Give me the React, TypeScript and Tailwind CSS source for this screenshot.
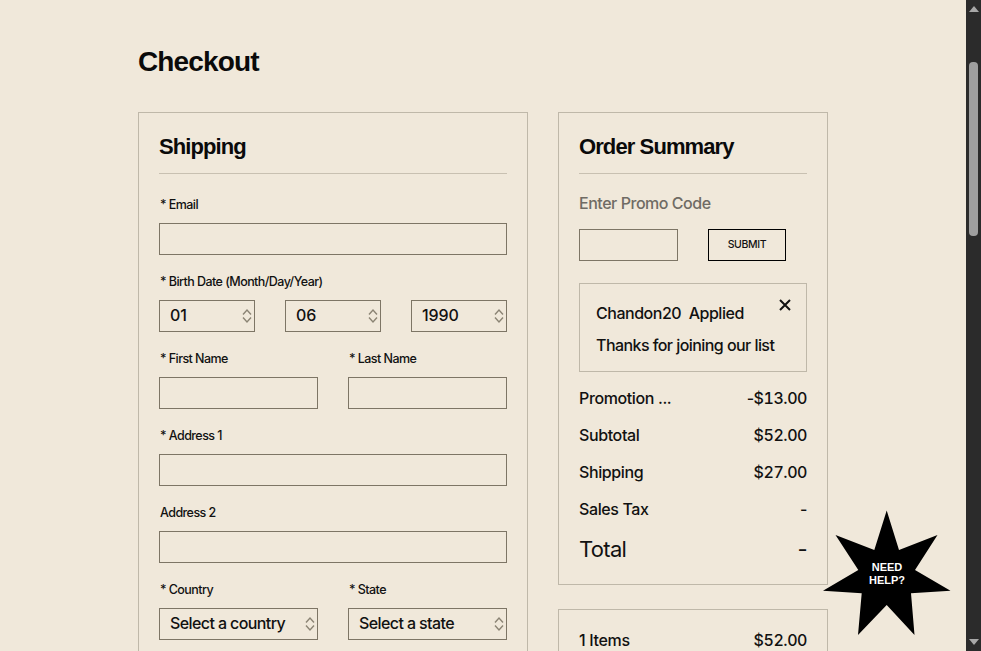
const font = "font-['Inter',sans-serif]";
const heading = "font-['Liberation_Sans',Arial,sans-serif] font-bold text-[#0a0a0a]";

function UpDown({ className }: { className?: string }) {
  return (
    <svg width="10" height="18" viewBox="0 0 10 18" fill="none" className={className}>
      <path d="M1 7.5 L5 3 L9 7.5" stroke="#8b8474" strokeWidth="1.4" />
      <path d="M1 10.5 L5 15 L9 10.5" stroke="#8b8474" strokeWidth="1.4" />
    </svg>
  );
}

function Label({ children }: { children: React.ReactNode }) {
  return <div className="h-[14px] pl-px text-[12.5px] font-medium leading-[14px] tracking-[-0.55px] text-[#111]">{children}</div>;
}

function Box({ className = "" }: { className?: string }) {
  return <div className={`h-8 border border-[#7d7565] ${className}`} />;
}

function Field({ label, children }: { label: string; children?: React.ReactNode }) {
  return (
    <div className="flex min-w-0 flex-col gap-[11px]">
      <Label>{label}</Label>
      {children ?? <Box />}
    </div>
  );
}

function Spinner({ value }: { value: string }) {
  return (
    <div className="flex h-8 items-center justify-between border border-[#7d7565] pl-[10px] pr-[2px] text-[16px] font-[450] tracking-[-0.1px] text-[#111]">
      <span className="pb-[2px]">{value}</span>
      <UpDown />
    </div>
  );
}

function SelectBox({ value }: { value: string }) {
  return (
    <div className="flex h-8 items-center justify-between border border-[#7d7565] pl-[10px] pr-[2px] text-[16px] font-[450] tracking-[-0.6px] text-[#111]">
      <span className="pb-[2px]">{value}</span>
      <UpDown />
    </div>
  );
}

function Row({ label, children }: { label: string; children: React.ReactNode }) {
  return (
    <div className="flex h-[37px] items-center justify-between text-[16px] font-[450] tracking-[-0.38px] text-[#111]">
      <span>{label}</span>
      <span className="tracking-[-0.45px] tabular-nums">{children}</span>
    </div>
  );
}

export default function App() {
  return (
    <div className={`relative flex h-[651px] overflow-hidden bg-[#f0e8da] ${font}`}>
      <main className="h-[651px] w-[966px] shrink-0 overflow-hidden">
        <div className="mx-auto w-[690px]">
          <h1 className={`h-[112px] pt-[45px] text-[28px] leading-[34px] tracking-[-0.85px] ${heading}`}>Checkout</h1>
          <div className="flex items-start gap-[30px]">
            {/* Shipping */}
            <section className="w-[390px] border border-[#bfb8a9] px-5 pb-5 pt-[19px]">
              <h2 className={`h-[42px] border-b border-[#c8c0b1] text-[22px] leading-[29px] tracking-[-0.9px] ${heading}`}>Shipping</h2>
              <div className="mt-6 flex flex-col gap-5">
                <Field label="* Email" />
                <Field label="* Birth Date (Month/Day/Year)">
                  <div className="grid grid-cols-[96px_96px_96px] justify-between">
                    <Spinner value="01" />
                    <Spinner value="06" />
                    <Spinner value="1990" />
                  </div>
                </Field>
                <div className="grid grid-cols-[159px_159px] justify-between">
                  <Field label="* First Name" />
                  <Field label="* Last Name" />
                </div>
                <Field label="* Address 1" />
                <Field label="Address 2" />
                <div className="grid grid-cols-[159px_159px] justify-between">
                  <Field label="* Country">
                    <SelectBox value="Select a country" />
                  </Field>
                  <Field label="* State">
                    <SelectBox value="Select a state" />
                  </Field>
                </div>
              </div>
            </section>

            {/* Order summary */}
            <div className="flex w-[270px] flex-col gap-6">
              <section className="h-[473px] border border-[#bfb8a9] px-5 pt-[19px]">
                <h2 className={`h-[42px] border-b border-[#c8c0b1] text-[22px] leading-[29px] tracking-[-0.9px] ${heading}`}>Order Summary</h2>
                <div className="mt-[19px] h-[20px] text-[16px] font-[450] leading-[20px] tracking-[-0.46px] text-[#6f6b64]">Enter Promo Code</div>
                <div className="mt-4 flex gap-[30px]">
                  <Box className="w-[99px]" />
                  <button className="h-8 w-[78px] border border-black text-[10.5px] font-medium tracking-[-0.35px] text-[#111]">SUBMIT</button>
                </div>
                <div className="relative mt-[22px] h-[89px] border border-[#bfb8a9] px-4 pt-[19px] text-[16px] font-[450] leading-[20px] tracking-[-0.48px] text-[#111]">
                  <div className="whitespace-pre">Chandon20  Applied</div>
                  <div className="mt-3 tracking-[-0.56px]">Thanks for joining our list</div>
                  <svg width="12" height="12" viewBox="0 0 12 12" className="absolute right-[15px] top-[15px]">
                    <path d="M1 1 L11 11 M11 1 L1 11" stroke="#111" strokeWidth="2" />
                  </svg>
                </div>
                <div className="mt-[7px]">
                  <Row label="Promotion ...">
                    <span className="normal-nums">-</span>$13.00
                  </Row>
                  <Row label="Subtotal">$52.00</Row>
                  <Row label="Shipping">$27.00</Row>
                  <Row label="Sales Tax">
                    <span className="normal-nums">-</span>
                  </Row>
                </div>
                <div className="flex h-[44px] items-center justify-between text-[22px] tracking-[-0.7px] text-[#111]">
                  <span>Total</span>
                  <span>-</span>
                </div>
              </section>
              <section className="border border-[#bfb8a9] px-5 pb-5 pt-[20px]">
                <div className="flex h-[20px] items-center justify-between text-[16px] font-[450] tracking-[-0.32px] text-[#111]">
                  <span>1 Items</span>
                  <span className="tracking-[-0.45px] tabular-nums">$52.00</span>
                </div>
              </section>
            </div>
          </div>
        </div>
      </main>

      {/* scrollbar */}
      <aside className="flex h-[651px] w-[15px] shrink-0 flex-col items-center justify-between bg-[#2b2b2b]">
        <div className="flex w-full flex-col items-center">
          <svg width="10" height="6" viewBox="0 0 10 6" className="mt-[6px]"><path d="M5 0 L10 6 L0 6 Z" fill="#a8a8a8" /></svg>
          <div className="mt-[50px] h-[174px] w-[9px] rounded-[4px] bg-[#9f9f9f]" />
        </div>
        <svg width="10" height="6" viewBox="0 0 10 6" className="mb-[6px]"><path d="M5 6 L10 0 L0 0 Z" fill="#a8a8a8" /></svg>
      </aside>

      {/* need help badge */}
      <div className="absolute left-[823px] top-[510px] h-[125px] w-[128px]">
        <svg width="128" height="125" viewBox="823 510 128 125" className="absolute inset-0">
          <path
            d="M886.7 510.5 L899 550 L937.5 535 L915 570 L950.5 590.7 L911 593.3 L914.5 635 L886.7 605 L858 635 L861.7 593.3 L823 590.7 L858.3 570 L835.5 535 L874.3 550 Z"
            fill="#000"
          />
        </svg>
        <div className="absolute left-0 top-[51px] w-full text-center font-['Liberation_Sans',Arial,sans-serif] text-[11px] font-bold leading-[13px] text-white">
          NEED
          <br />
          HELP?
        </div>
      </div>
    </div>
  );
}
